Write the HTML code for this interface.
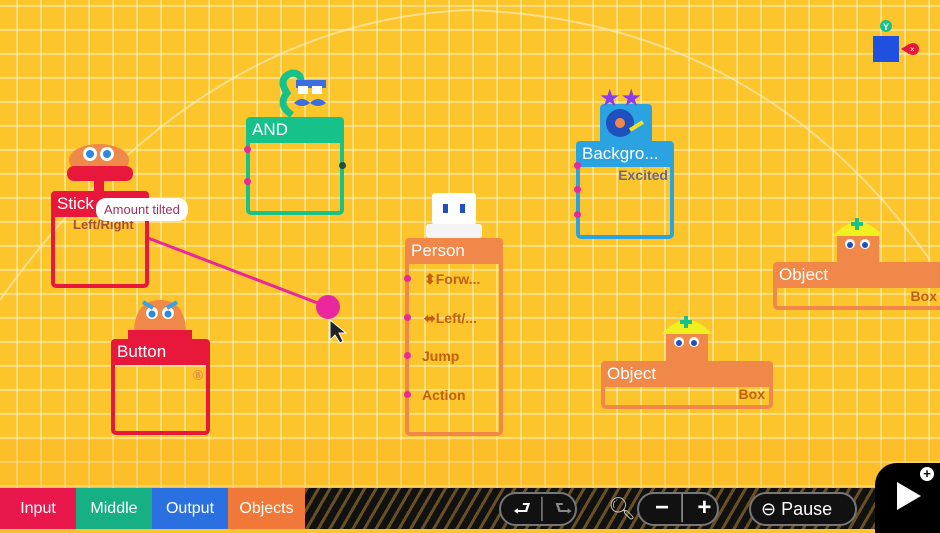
<!DOCTYPE html>
<html><head><meta charset="utf-8"><style>
*{margin:0;padding:0;box-sizing:border-box}
body{width:940px;height:529px;overflow:hidden;position:relative;font-family:"Liberation Sans",sans-serif;background:#fcc52c}
.grid{position:absolute;left:0;top:0;width:940px;height:488px;background-color:#fcc52c;
background-image:linear-gradient(rgba(255,240,190,.55) 2px,transparent 2px),linear-gradient(90deg,rgba(255,240,190,.55) 2px,transparent 2px);
background-size:24px 24px;background-position:-8px 5px}
.low{position:absolute;left:0;top:440px;width:940px;height:48px;background:rgba(250,170,30,.25)}
.node{position:absolute;border:4px solid;border-radius:5px}
.hd{position:absolute;left:-4px;top:-4px;right:-4px;height:26px;color:#fff;font-size:17px;padding:3px 6px;border-radius:4px 4px 0 0}
.lbl{position:absolute;font-size:14px;font-weight:600}
.dot{position:absolute;width:7px;height:7px;border-radius:50%;background:#e8289c}
.bar{position:absolute;left:0;top:488px;width:940px;height:41px;background:repeating-linear-gradient(-60deg,#111 0 7px,#6a5020 7px 10px)}
.tab{position:absolute;top:488px;height:41px;color:#fff;font-size:16px;text-align:center;line-height:41px}
.pill{position:absolute;top:492px;height:34px;border:2px solid #777;border-radius:17px;background:#111;color:#fff}
</style></head><body>
<div class="grid"></div><div class="low"></div>
<svg style="position:absolute;left:0;top:0" width="940" height="488">
<path d="M0 300 Q 200 20 470 10 Q 760 20 930 260" stroke="rgba(255,240,200,.6)" stroke-width="2" fill="none"/>
<line x1="148" y1="238" x2="328" y2="307" stroke="#e8289c" stroke-width="3"/>
<circle cx="328" cy="307" r="12" fill="#e8289c"/>
<path d="M330 320 l0 20 l5 -5 l5 8 l3 -2 l-4 -8 l7 0z" fill="#222" stroke="#fff" stroke-width="1"/>
<ellipse cx="99" cy="160" rx="30" ry="16" fill="#f0884a"/>
<rect x="67" y="166" width="66" height="15" rx="7" fill="#e8183c"/>
<rect x="94" y="178" width="10" height="16" fill="#e8183c"/>
<circle cx="90" cy="154" r="7" fill="#fff"/><circle cx="107" cy="154" r="7" fill="#fff"/>
<circle cx="90" cy="154" r="4" fill="#2a8ae0"/><circle cx="107" cy="154" r="4" fill="#2a8ae0"/>
<path d="M134 330 Q136 300 160 300 Q184 300 186 330z" fill="#f0884a"/>
<rect x="128" y="330" width="64" height="10" fill="#e8183c"/>
<circle cx="152" cy="313" r="6" fill="#fff"/><circle cx="168" cy="313" r="6" fill="#fff"/>
<circle cx="152" cy="314" r="3.5" fill="#2a8ae0"/><circle cx="168" cy="314" r="3.5" fill="#2a8ae0"/>
<path d="M143 302 l10 6 M177 302 l-10 6" stroke="#3aa0e8" stroke-width="4"/>
<path d="M292 115 q-15 -10 -5 -22 q-10 -15 5 -20 q12 0 8 15" stroke="#17c28a" stroke-width="7" fill="none"/>
<rect x="296" y="80" width="30" height="8" fill="#3a6fe0"/>
<rect x="298" y="86" width="10" height="8" fill="#fff"/><rect x="312" y="86" width="10" height="8" fill="#fff"/>
<path d="M294 103 q8 -8 16 0 q8 -8 16 0 q-8 6 -16 0 q-8 6 -16 0z" fill="#3a6fe0"/>
<rect x="600" y="104" width="52" height="40" rx="4" fill="#2aa3e0"/>
<circle cx="620" cy="123" r="14" fill="#2050c0"/><circle cx="620" cy="123" r="5" fill="#f0884a"/>
<line x1="630" y1="130" x2="643" y2="122" stroke="#f0e020" stroke-width="4"/>
<text x="599" y="106" font-size="24" fill="#8a3af0">★★</text>
<rect x="432" y="193" width="44" height="32" rx="3" fill="#fff"/>
<rect x="426" y="224" width="56" height="14" rx="3" fill="#f4f4f4"/>
<rect x="443" y="204" width="5" height="9" fill="#2050c0"/><rect x="460" y="204" width="5" height="9" fill="#2050c0"/>
<g><rect x="666" y="330" width="42" height="34" fill="#f0884a"/><path d="M662 334 q25 -28 50 0z" fill="#f0f020"/><path d="M686 316 v12 M680 322 h12" stroke="#17c28a" stroke-width="4"/>
<circle cx="679" cy="342" r="5" fill="#fff"/><circle cx="694" cy="342" r="5" fill="#fff"/><circle cx="679" cy="343" r="3" fill="#2050c0"/><circle cx="694" cy="343" r="3" fill="#2050c0"/></g>
<g><rect x="837" y="232" width="42" height="36" fill="#f0884a"/><path d="M833 236 q25 -28 50 0z" fill="#f0f020"/><path d="M857 218 v12 M851 224 h12" stroke="#17c28a" stroke-width="4"/>
<circle cx="850" cy="244" r="5" fill="#fff"/><circle cx="865" cy="244" r="5" fill="#fff"/><circle cx="850" cy="245" r="3" fill="#2050c0"/><circle cx="865" cy="245" r="3" fill="#2050c0"/></g>
<rect x="873" y="36" width="26" height="26" fill="#2050e0"/>
<circle cx="886" cy="26" r="6" fill="#17c28a"/><text x="883" y="30" font-size="9" fill="#fff" font-weight="bold">Y</text>
<path d="M901 49 l8 -5 v10z" fill="#e8183c"/><circle cx="913" cy="49" r="6" fill="#e8183c"/><text x="910" y="52" font-size="8" fill="#fff">×</text>
</svg>

<div class="node" style="left:51px;top:191px;width:98px;height:97px;border-color:#e8183c"><div class="hd" style="background:#e8183c">Stick</div>
<div class="lbl" style="left:18px;top:22px;color:#a4503a;font-size:13px">Left/Right</div></div>
<div style="position:absolute;left:96px;top:198px;background:#fff;border-radius:10px;padding:4px 8px;font-size:13px;color:#a03060">Amount tilted</div>

<div class="node" style="left:111px;top:339px;width:99px;height:96px;border-color:#e8183c"><div class="hd" style="background:#e8183c">Button</div>
<div class="lbl" style="left:78px;top:24px;color:#e8884a;font-size:10px">Ⓑ</div></div>

<div class="node" style="left:246px;top:117px;width:98px;height:98px;border-color:#17c28a"><div class="hd" style="background:#17c28a">AND</div></div>
<div class="dot" style="left:244px;top:146px"></div><div class="dot" style="left:244px;top:178px"></div>
<div class="dot" style="left:339px;top:162px;background:#1a5040"></div>

<div class="node" style="left:576px;top:141px;width:98px;height:98px;border-color:#2aa3e0"><div class="hd" style="background:#2aa3e0">Backgro...</div>
<div class="lbl" style="right:2px;top:22px;color:#6a6a80">Excited</div></div>
<div class="dot" style="left:574px;top:162px"></div><div class="dot" style="left:574px;top:186px"></div><div class="dot" style="left:574px;top:211px"></div>

<div class="node" style="left:405px;top:238px;width:98px;height:198px;border-color:#f0884a"><div class="hd" style="background:#f0884a">Person</div>
<div class="lbl" style="left:15px;top:29px;color:#c06010">⬍Forw...</div>
<div class="lbl" style="left:15px;top:68px;color:#c06010">⬌Left/...</div>
<div class="lbl" style="left:13px;top:106px;color:#c06010">Jump</div>
<div class="lbl" style="left:13px;top:145px;color:#c06010">Action</div></div>
<div class="dot" style="left:404px;top:275px"></div><div class="dot" style="left:404px;top:314px"></div><div class="dot" style="left:404px;top:352px"></div><div class="dot" style="left:404px;top:391px"></div>

<div class="node" style="left:601px;top:361px;width:172px;height:48px;border-color:#f0884a;border-top-width:0"><div class="hd" style="background:#f0884a;top:0">Object</div>
<div class="lbl" style="right:4px;top:25px;color:#c06010">Box</div></div>
<div class="node" style="left:773px;top:262px;width:180px;height:48px;border-color:#f0884a;border-top-width:0"><div class="hd" style="background:#f0884a;top:0">Object</div>
<div class="lbl" style="right:12px;top:26px;color:#c06010">Box</div></div>

<div class="bar"></div>
<div class="tab" style="left:0;width:76px;background:#e8184c">Input</div>
<div class="tab" style="left:76px;width:76px;background:#17b084">Middle</div>
<div class="tab" style="left:152px;width:76px;background:#2a70e0">Output</div>
<div class="tab" style="left:228px;width:77px;background:#f07838">Objects</div>
<div class="pill" style="left:499px;width:78px;font-size:20px;line-height:30px;padding-left:12px">⮐ <span style="color:#888">│ ⮑</span></div>
<div style="position:absolute;left:608px;top:496px;font-size:22px;color:#ccc">🔍︎</div>
<div class="pill" style="left:637px;width:82px;font-size:24px;line-height:28px;padding-left:16px;font-weight:bold">− <span style="color:#888;font-weight:normal">│</span> +</div>
<div class="pill" style="left:749px;width:108px;font-size:18px;line-height:30px;padding-left:10px">⊖ Pause</div>
<div style="position:absolute;left:875px;top:463px;width:70px;height:70px;background:#000;border-radius:22px 0 0 0"></div>
<div style="position:absolute;left:897px;top:482px;width:0;height:0;border-left:24px solid #fff;border-top:14px solid transparent;border-bottom:14px solid transparent"></div>
<div style="position:absolute;left:920px;top:467px;width:14px;height:14px;border-radius:50%;background:#fff;color:#000;font-size:13px;line-height:14px;text-align:center;font-weight:bold">+</div>
</body></html>
